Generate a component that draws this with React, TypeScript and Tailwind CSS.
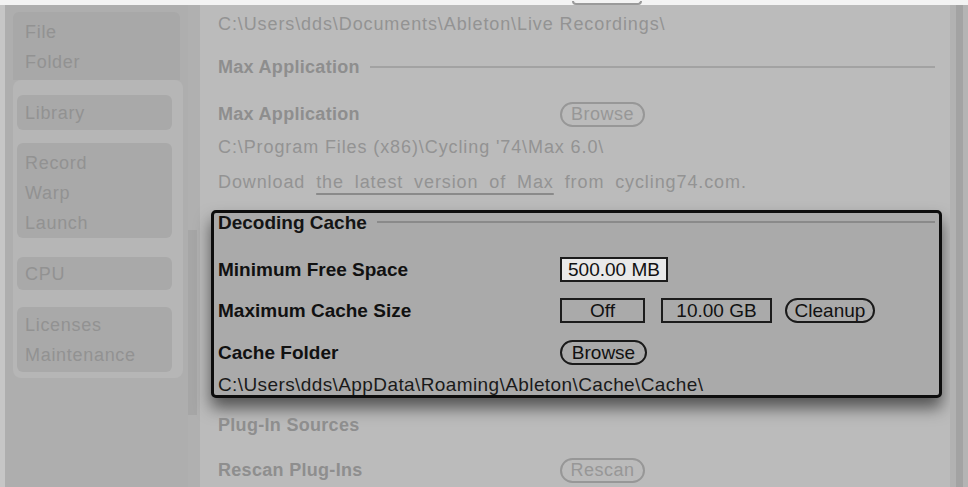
import React from "react";

const faded = "text-[#939393] text-[18px] tracking-[0.9px] leading-none";
const sideText = "text-[#929292] text-[18px] tracking-[0.7px] leading-none";

function SideItem({ children }: { children: React.ReactNode }) {
  return <div className={`h-[30px] flex items-center ${sideText}`}>{children}</div>;
}

function Pill({ children, dark, w }: { children: React.ReactNode; dark?: boolean; w: string }) {
  return (
    <div
      className={`${w} h-[25px] rounded-full border-[2px] flex items-center justify-center leading-none ${
        dark
          ? "border-[#1a1a1a] text-[#111] text-[19px]"
          : "border-[#979797] text-[#979797] text-[18px] tracking-[0.5px]"
      }`}
    >
      {children}
    </div>
  );
}

function Field({ children, w, light }: { children: React.ReactNode; w: string; light?: boolean }) {
  return (
    <div
      className={`${w} h-[25px] border-[2px] border-[#1c1c1c] flex items-center justify-center text-[19px] text-[#111] leading-none ${
        light ? "bg-[#e9e9e9]" : "bg-[#aaaaaa]"
      }`}
    >
      {children}
    </div>
  );
}

export default function App() {
  return (
    <div
      className="w-[968px] h-[487px] overflow-hidden bg-[#f5f5f5] flex flex-col"
      style={{ fontFamily: '"Liberation Sans", Arial, sans-serif' }}
    >
      <div className="h-[5px] shrink-0 bg-[#f3f3f3]" />
      <div className="flex-1 flex min-h-0">
        {/* left edge */}
        <div className="w-[5px] bg-[#c6c6c6]" />
        {/* sidebar */}
        <div className="w-[183px] bg-[#aeaeae] pt-[7px] flex flex-col">
          <div className="ml-[8px] w-[167px] h-[68px] bg-[#a8a8a8] rounded-t-[6px] pl-[12px] pt-[5px]">
            <SideItem>File</SideItem>
            <SideItem>Folder</SideItem>
          </div>
          <div className="ml-[8px] w-[170px] bg-[#b6b6b6] rounded-[8px] pt-[15px] pb-[6px] px-[4px] flex flex-col">
            <div className="w-[155px] h-[35px] bg-[#a9a9a9] rounded-[6px] pl-[8px] pt-[3px]">
              <SideItem>Library</SideItem>
            </div>
            <div className="mt-[13px] w-[155px] h-[95px] bg-[#a9a9a9] rounded-[6px] pl-[8px] pt-[5px]">
              <SideItem>Record</SideItem>
              <SideItem>Warp</SideItem>
              <SideItem>Launch</SideItem>
            </div>
            <div className="mt-[19px] w-[155px] h-[33px] bg-[#a9a9a9] rounded-[6px] pl-[8px] pt-[2px]">
              <SideItem>CPU</SideItem>
            </div>
            <div className="mt-[17px] w-[155px] h-[65px] bg-[#a9a9a9] rounded-[6px] pl-[8px] pt-[3px]">
              <SideItem>Licenses</SideItem>
              <SideItem>Maintenance</SideItem>
            </div>
          </div>
        </div>
        {/* separator */}
        <div className="w-[12px] bg-[#b0b0b0] flex flex-col">
          <div className="h-[225px]" />
          <div className="h-[185px] w-[9px] bg-[#a6a6a6]" />
        </div>
        {/* main */}
        <div className="w-[750px] bg-[#bbbbbb] flex flex-col">
          <div className="pl-[18px] h-[38px] flex items-center relative">
            <div className="absolute left-[372px] top-[-4px] w-[70px] h-[4px] border-b-[2px] border-x-[2px] border-[#9a9a9a] rounded-b-[6px]" />
            <span className={faded}>C:\Users\dds\Documents\Ableton\Live Recordings\</span>
          </div>
          <div className="pl-[18px] pr-[15px] h-[48px] flex items-center">
            <span className="text-[#8e8e8e] text-[18px] font-bold tracking-[0.3px] leading-none">Max Application</span>
            <div className="flex-1 ml-[10px] h-[2px] bg-[#a2a2a2]" />
          </div>
          <div className="pl-[18px] h-[46px] flex items-center">
            <span className="w-[342px] text-[#8e8e8e] text-[18px] font-bold tracking-[0.3px] leading-none">Max Application</span>
            <Pill w="w-[85px]">Browse</Pill>
          </div>
          <div className="pl-[18px] h-[20px] flex items-center">
            <span className={faded}>C:\Program Files (x86)\Cycling '74\Max 6.0\</span>
          </div>
          <div className="pl-[18px] h-[50px] flex items-center">
            <span className={`${faded} [word-spacing:5px]`}>
              Download{" "}
              <span className="underline decoration-[#8a8a8a] decoration-[2px] underline-offset-[5px]">the latest version of Max</span>{" "}
              from cycling74.com.
            </span>
          </div>
          {/* highlighted box */}
          <div className="mt-[3px] ml-[11px] w-[731px] h-[188px] border-[3px] border-[#0d0d0d] rounded-[5px] bg-[#aaaaaa] shadow-[0_10px_16px_rgba(0,0,0,0.55)] pl-[4px] pr-[4px] flex flex-col">
            <div className="h-[18px] flex items-center">
              <span className="text-[19px] font-bold text-[#141414] leading-none">Decoding Cache</span>
              <div className="flex-1 ml-[10px] h-[2px] bg-[#8a8a8a]" />
            </div>
            <div className="mt-[20px] h-[36px] flex items-center">
              <span className="w-[342px] text-[19px] font-bold text-[#111] leading-none">Minimum Free Space</span>
              <Field w="w-[108px]" light>500.00 MB</Field>
            </div>
            <div className="mt-[5px] h-[36px] flex items-center">
              <span className="w-[342px] text-[19px] font-bold text-[#111] leading-none">Maximum Cache Size</span>
              <Field w="w-[85px]">Off</Field>
              <div className="ml-[16px]">
                <Field w="w-[111px]">10.00 GB</Field>
              </div>
              <div className="ml-[13px]">
                <Pill dark w="w-[90px]">Cleanup</Pill>
              </div>
            </div>
            <div className="mt-[6px] h-[36px] flex items-center">
              <span className="w-[342px] text-[19px] font-bold text-[#111] leading-none">Cache Folder</span>
              <Pill dark w="w-[87px]">Browse</Pill>
            </div>
            <div className="mt-[4px] h-[20px] flex items-center">
              <span className="text-[19px] tracking-[0.4px] text-[#1a1a1a] leading-none">C:\Users\dds\AppData\Roaming\Ableton\Cache\Cache\</span>
            </div>
          </div>
          <div className="mt-[12px] pl-[18px] pr-[15px] h-[30px] flex items-center">
            <span className="text-[#8e8e8e] text-[18px] font-bold tracking-[0.3px] leading-none">Plug-In Sources</span>
          </div>
          <div className="mt-[15px] pl-[18px] h-[30px] flex items-center">
            <span className="w-[342px] text-[#8e8e8e] text-[18px] font-bold tracking-[0.3px] leading-none">Rescan Plug-Ins</span>
            <Pill w="w-[85px]">Rescan</Pill>
          </div>
        </div>
        {/* right strip */}
        <div className="w-[18px] flex">
          <div className="w-[6px] bg-[#b2b2b2]" />
          <div className="w-[7px] bg-[#a3a3a3]" />
          <div className="w-[5px] bg-[#b4b4b4]" />
        </div>
      </div>
    </div>
  );
}
